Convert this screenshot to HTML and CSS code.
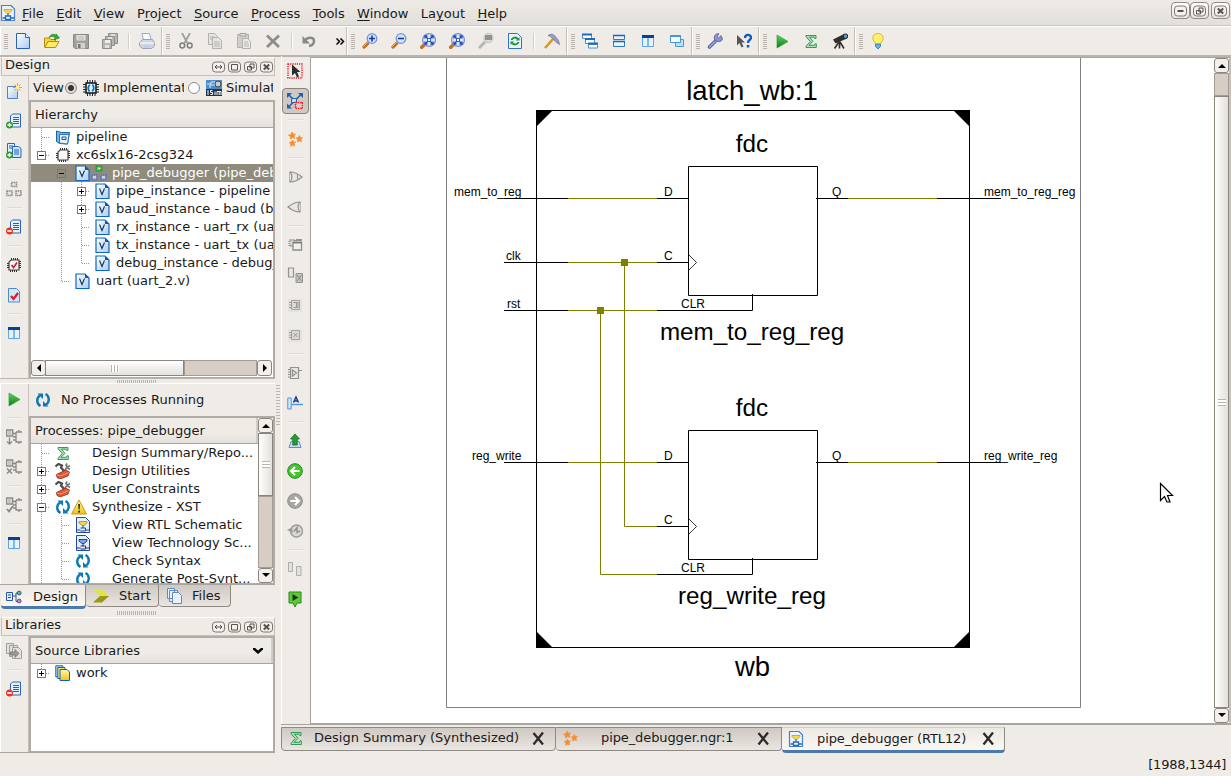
FILE: index.html
```html
<!DOCTYPE html>
<html lang="en">
<head>
<meta charset="utf-8">
<title>ISE Project Navigator</title>
<link rel="stylesheet" href="styles.css">
</head>
<body>
<svg class="defs" width="0" height="0" aria-hidden="true">
<defs>
<linearGradient id="gPage" x1="0" y1="0" x2="1" y2="1"><stop offset="0" stop-color="#fff"/><stop offset="1" stop-color="#a9cdf2"/></linearGradient>
<linearGradient id="gGreen" x1="0" y1="0" x2="0" y2="1"><stop offset="0" stop-color="#5fd45f"/><stop offset="1" stop-color="#0a7d14"/></linearGradient>
<linearGradient id="gYel" x1="0" y1="0" x2="0" y2="1"><stop offset="0" stop-color="#fff9a0"/><stop offset="1" stop-color="#f2c11c"/></linearGradient>
</defs>
<symbol id="b-v" viewBox="0 0 20 18"><path d="M10.5 0v18" class="dot"/></symbol>
<symbol id="b-t" viewBox="0 0 20 18"><path d="M10.5 0v18M11 9.500h8" class="dot"/></symbol>
<symbol id="b-l" viewBox="0 0 20 18"><path d="M10.500 0v10M11 9.500h8" class="dot"/></symbol>
<symbol id="b-box" viewBox="0 0 20 18"><path d="M15 9.500h4" class="dot"/><rect x="6.500" y="5.500" width="8" height="8" fill="#fff" stroke="#7d7a74"/><path d="M8 9.500h5" stroke="#000"/></symbol>
<symbol id="b-minus" viewBox="0 0 20 18"><path d="M10.500 0v5" class="dot"/><use href="#b-box"/></symbol>
<symbol id="b-plus" viewBox="0 0 20 18"><path d="M10.500 0v18" class="dot"/><use href="#b-box"/><path d="M10.500 7v5" stroke="#000"/></symbol>
<symbol id="b-plus1" viewBox="0 0 20 18"><path d="M10.500 0v5" class="dot"/><use href="#b-box"/><path d="M10.500 7v5" stroke="#000"/></symbol>
<symbol id="b-minusv" viewBox="0 0 20 18"><path d="M10.500 0v18" class="dot"/><use href="#b-box"/></symbol>
<symbol id="b-sel" viewBox="0 0 20 18"><path d="M15 9.500h4" class="dot"/><rect x="6.500" y="5.500" width="8" height="8" fill="none" stroke="#7c786a"/><path d="M8 9.500h5" stroke="#000"/></symbol>

<symbol id="new" viewBox="0 0 16 16"><path d="M1.500.5h9l4 4v11h-13z" fill="url(#gPage)" stroke="#2a62b8"/><path d="M10.500.5v4h4" fill="#fff" stroke="#2a62b8"/></symbol>
<symbol id="open" viewBox="0 0 16 16"><path d="M.5 14V5h5l1 1.500h5V9" fill="#f5d73b" stroke="#b78d10"/><path d="M.8 14.500L4 8.500h11l-3.500 6z" fill="#ffec62" stroke="#b78d10"/><path d="M5 4.500C7 1 10 .5 12 2.500V.8L15.500 5 10 6.800l1.200-2C9.500 3.300 7.500 3 5 4.500z" fill="#37ad2c" stroke="#157d17" stroke-width=".6"/></symbol>
<symbol id="save" viewBox="0 0 16 16"><path d="M.5 1.500h15v14H2L.5 14z" fill="#a3a19e" stroke="#8a8885"/><path d="M3.500 2h9v5.500h-9z" fill="#e4e2df"/><path d="M5 4h6M5 6h6" stroke="#b5b3b0"/><path d="M4 10h8v5.500H4z" fill="#d4d2cf"/><path d="M5 11h2.500v4H5z" fill="#777"/></symbol>
<symbol id="saveall" viewBox="0 0 16 16"><g fill="#b9b7b4" stroke="#8f8d8a"><path d="M6.500.5h9v10h-9z"/><path d="M3.500 3.500h9v9h-9z"/><path d="M.5 6.500h9v9h-9z"/></g><path d="M3 7h5v3H3z" fill="#eee"/><path d="M3 12h4v3H3zM6 4h4v2H6zM9 1h4v2H9z" fill="#e4e2df"/></symbol>
<symbol id="print" viewBox="0 0 16 16"><path d="M3 .5h7.500l2 7h-8z" fill="#f8fbff" stroke="#9bacca"/><path d="M.5 10l3-3.500h10l2 3.500v3l-3 2.500h-9l-3-2.500z" fill="#d3d6de" stroke="#9fa4b0"/><path d="M1 10h14" stroke="#fff"/><path d="M4 12.500h8v2H4z" fill="#b7d0ee"/></symbol>
<symbol id="cut" viewBox="0 0 16 16"><path d="M4 0l5.500 10M12 0L6.500 10" stroke="#a19f9c" stroke-width="1.800" fill="none"/><circle cx="4.300" cy="12.500" r="2.400" fill="none" stroke="#807e7b" stroke-width="1.500"/><circle cx="11.700" cy="12.500" r="2.400" fill="none" stroke="#807e7b" stroke-width="1.500"/></symbol>
<symbol id="copy" viewBox="0 0 16 16"><g fill="#e6e4e1" stroke="#b3b1ae"><path d="M1.500.5h6l3 3v8h-9z"/><path d="M5.500 4.500h6l3 3v8h-9z"/></g><path d="M3 4h4M3 6h2M7 9h5M7 11h6M7 13h6" stroke="#b5b3b0"/></symbol>
<symbol id="paste" viewBox="0 0 16 16"><path d="M1.500 1.500h11v13h-11z" fill="#d0cecb" stroke="#b3b1ae"/><path d="M4 .5h6v2.500H4z" fill="#e4e2df" stroke="#a3a19e"/><path d="M6.500 5.500h5l3 3v7h-8z" fill="#eceae7" stroke="#b3b1ae"/><path d="M8 9h4M8 11h5M8 13h5" stroke="#b5b3b0"/></symbol>
<symbol id="del" viewBox="0 0 16 16"><path d="M2 2.500l12 11.500M14 2.500L2 14" stroke="#8f8d89" stroke-width="2.800"/></symbol>
<symbol id="undo" viewBox="0 0 16 16"><path d="M4 7.500C7 3.500 13 4 13 8c0 3-2 4.500-5 5" fill="none" stroke="#8b8986" stroke-width="2.500"/><path d="M1.500 3v7.500h7.500z" fill="#8b8986"/></symbol>
<symbol id="lens" viewBox="0 0 16 16"><path d="M1 15l5.500-5.500" stroke="#c36a1b" stroke-width="3.200"/><path d="M1 14l5-5" stroke="#f4a953" stroke-width="1"/><circle cx="10" cy="5.500" r="4.800" fill="#cfe6ff" stroke="#7e8fd6" stroke-width="1.300"/></symbol>
<symbol id="zin" viewBox="0 0 16 16"><use href="#lens"/><path d="M7 5.500h6M10 2.500v6" stroke="#153a9c" stroke-width="1.600"/></symbol>
<symbol id="zout" viewBox="0 0 16 16"><use href="#lens"/><path d="M7 5.500h6" stroke="#153a9c" stroke-width="1.600"/></symbol>
<symbol id="zfit" viewBox="0 0 16 16"><path d="M.5 15.500l4.500-4.500" stroke="#c8701f" stroke-width="3.600"/><circle cx="9" cy="7" r="6.400" fill="#d6eaff" stroke="#7e8fd6" stroke-width="1.300"/><path d="M5.500 3.500l7 7M12.500 3.500l-7 7" stroke="#1c45a6" stroke-width="1.300"/><path d="M5 5.500V3h2.500M10.500 3H13v2.500M5 8.500V11h2.500M10.500 11H13V8.500" fill="none" stroke="#1c45a6" stroke-width="1.300"/><path d="M7.500 5.500h3v3h-3z" fill="#eaf4ff" stroke="#1c45a6" stroke-width=".8"/></symbol>
<symbol id="zsel" viewBox="0 0 16 16"><path d="M1 15l6-6" stroke="#b8b6b3" stroke-width="3"/><circle cx="10.500" cy="5" r="4.600" fill="#dddbd8" stroke="#c2c0bd"/><path d="M7 2h7v5H7z" fill="#93918e"/></symbol>
<symbol id="refresh" viewBox="0 0 16 16"><path d="M1.500.5h9l4 4v11h-13z" fill="#e9f4ff" stroke="#3173bd"/><path d="M4.500 7c1-3 5-3 6-1M11.500 9c-1 3-5 3-6 1" fill="none" stroke="#16962c" stroke-width="2"/><path d="M9 7.500h3.500V4zM7 8.500H3.500V12z" fill="#16962c"/></symbol>
<symbol id="hammer" viewBox="0 0 16 16"><path d="M1 15l8-9" stroke="#d59a16" stroke-width="2.600"/><path d="M4 2.500C7 .5 9 1 11 3l3.500 4.500 1 4-3-2-4-4C7 4 6 3 4 2.500z" fill="#9a9dbd" stroke="#6d7092" stroke-width=".7"/></symbol>
<symbol id="casc" viewBox="0 0 16 16"><g fill="#fff" stroke="#4c8fd3"><path d="M.5 1.500h9v4h-9zM3.500 6.500h9v4h-9zM6.500 11.500h9v3.500h-9z"/></g><path d="M0 1.500h10M3 6h10M6 10.500h10" stroke="#1f6ac0" stroke-width="2"/></symbol>
<symbol id="tileh" viewBox="0 0 16 16"><g fill="#e8f3ff" stroke="#2a7bc5"><path d="M2.500 2.500h11v4h-11zM2.500 8.500h11v5h-11z"/></g><path d="M2 2.500h12M2 8.500h12" stroke="#1b64b8" stroke-width="1.500"/></symbol>
<symbol id="tilev" viewBox="0 0 16 16"><path d="M2.500 2.500h11v11h-11z" fill="#e8f3ff" stroke="#5da5e4"/><path d="M8 3v11" stroke="#5da5e4" stroke-width="1.500"/><path d="M2 3.500h12" stroke="#08409a" stroke-width="3"/></symbol>
<symbol id="float" viewBox="0 0 16 16"><path d="M6.500 6.500h8v7h-8z" fill="#bfe0fb" stroke="#4a96dc"/><path d="M1.500 2.500h10v7h-10z" fill="#f4faff" stroke="#4a96dc"/><path d="M1 3h11" stroke="#4a96dc" stroke-width="2"/></symbol>
<symbol id="wrench" viewBox="0 0 16 16"><path d="M2.500 14L9 7.500" stroke="#5a62a5" stroke-width="3.600" stroke-linecap="round"/><path d="M2.500 14L9 7.500" stroke="#9aa0d6" stroke-width="1.600" stroke-linecap="round"/><path d="M14 2.500L11.500 5 10 3.800 12 .8C8.500.3 6.500 3 7.500 6c1.500 3.500 7 3.500 8 0z" fill="#8b92cf" stroke="#525a9f" stroke-width=".8"/></symbol>
<symbol id="whats" viewBox="0 0 16 16"><path d="M1 2v10.500L3.500 10l2 4.500 2-1-2-4H9z" fill="#555"/><path d="M9 5c0-4 6-4 6-.5 0 2.500-3 2.500-3 5.500" fill="none" stroke="#0b5bc0" stroke-width="2.300"/><path d="M10.800 12h2.500v2.500h-2.500z" fill="#0b5bc0"/></symbol>
<symbol id="play" viewBox="0 0 16 16"><path d="M3 2l11 6.500L3 15z" fill="url(#gGreen)" stroke="#27a33b" stroke-width=".7"/></symbol>
<symbol id="sigma" viewBox="0 0 16 16"><path d="M3 2.500h10v3h-1.200L11 4.200H6.500L10 8.300 6 12.300h5.300l.8-1.500h1.200V14.500H3v-1.200L7.300 8.500 3 3.800z" fill="#a9e0b5" stroke="#239347" stroke-width=".9"/></symbol>
<symbol id="scope" viewBox="0 0 16 16"><path d="M1 6.500L12 1l3 4.500L3.500 10.500z" fill="#30302d"/><circle cx="13.500" cy="3.200" r="2.300" fill="#4ba0c8" stroke="#222"/><path d="M7.500 8v7.500M7 9l-4.500 6.500M8 9l4 6.500" stroke="#30302d" stroke-width="1.600"/></symbol>
<symbol id="bulb" viewBox="0 0 16 16"><path d="M5.500 11C5 8.500 2.800 7.800 2.800 5c0-6 10.400-6 10.400 0 0 2.800-2.200 3.500-2.700 6z" fill="#fff36a" stroke="#e0b72c"/><path d="M5.500 11h5v2.500L8 16l-2.500-2.500z" fill="#69aee9" stroke="#3377b7" stroke-width=".8"/></symbol>

<symbol id="newsrc" viewBox="0 0 16 16"><path d="M1.500 3.500h10v12h-10z" fill="url(#gPage)" stroke="#4f83c8"/><path d="M11.500 0v9M7 4.500h9M8.500 1.500l6 6M14.500 1.500l-6 6" stroke="#f2973a"/><circle cx="11.500" cy="4.500" r="1.800" fill="#fff089"/></symbol>
<symbol id="doc" viewBox="0 0 16 16"><path d="M6.500 1h8v13h-10V3z" fill="#e5f1fd" stroke="#2a66be"/><path d="M7 4.500h6M7 6.500h6M7 8.500h6M7 10.500h6" stroke="#1d62c0"/></symbol>
<symbol id="adddoc" viewBox="0 0 16 16"><use href="#doc"/><circle cx="3.500" cy="12" r="3.500" fill="#2d9f32"/><path d="M1.500 12h4M3.500 10v4" stroke="#fff" stroke-width="1.300"/></symbol>
<symbol id="addcopy" viewBox="0 0 16 16"><path d="M1.500.5h7v11h-7z" fill="#e5f1fd" stroke="#2a66be"/><path d="M6.500 3.500h6l2.500 2v9H6.500z" fill="#cfe5fb" stroke="#2a66be"/><path d="M3 3h4M3 5h3M8 7h5M8 9h5M8 11h5" stroke="#1d62c0"/><circle cx="3.500" cy="12" r="3.500" fill="#2d9f32"/><path d="M1.500 12h4M3.500 10v4" stroke="#fff" stroke-width="1.300"/></symbol>
<symbol id="deldoc" viewBox="0 0 16 16"><use href="#doc"/><circle cx="3.500" cy="12" r="3.500" fill="#df3922"/><path d="M1.300 12h4.400" stroke="#fff" stroke-width="1.600"/></symbol>
<symbol id="hier" viewBox="0 0 16 16"><g fill="#e8e6e3" stroke="#92908d" stroke-width="1.600"><path d="M5.500 1.500h5v4h-5zM1 10h5v4.500H1zM10 10h5v4.500h-5z" stroke-dasharray="1.500 .5"/></g></symbol>
<symbol id="hierg" viewBox="0 0 16 16"><g stroke-width="1.800" stroke-dasharray="1.500 .4"><path d="M5.500 1.500h5v4h-5z" stroke="#1b9a30" fill="#bfe8c0"/><path d="M1 10h5v4.500H1zM10 10h5v4.500h-5z" stroke="#6678b4" fill="#c9d6ec"/></g></symbol>
<symbol id="chip" viewBox="0 0 16 16"><path d="M5 3h8v10H3V5z" fill="#f7f7f5" stroke="#444" stroke-width="1.200"/><path d="M5.500 1v2M7.500 1v2M9.500 1v2M11.500 1v2M4.500 13v2M6.500 13v2M8.500 13v2M10.500 13v2M1 6.500h2M1 8.500h2M1 10.500h2M13 4.500h2M13 6.500h2M13 8.500h2M13 10.500h2" stroke="#333"/></symbol>
<symbol id="chipchk" viewBox="0 0 16 16"><use href="#chip"/><path d="M5.500 8l2 2.500 3.500-5" fill="none" stroke="#d32028" stroke-width="1.700"/></symbol>
<symbol id="chipblue" viewBox="0 0 16 16"><path d="M3 3h10v10H3z" fill="#e3f3fb" stroke="#111" stroke-width="1.500"/><path d="M4.500 0v3M7 0v3M9.500 0v3M12 0v3M4.500 13v3M7 13v3M9.500 13v3M12 13v3M0 4.500h3M0 7h3M0 9.500h3M0 12h3M13 4.500h3M13 7h3M13 9.500h3M13 12h3" stroke="#222"/><path d="M6.500 11.500C4.500 9 5 6 7 5M9.500 4.500c2 2.500 1.500 5.500-.5 6.500" fill="none" stroke="#0c70b6" stroke-width="1.800"/></symbol>
<symbol id="docchk" viewBox="0 0 16 16"><path d="M2.500 1.500h8l3 3v10.500h-11z" fill="#d4e8fb" stroke="#4c8ad0"/><path d="M5 9l2.500 3L12 6" fill="none" stroke="#dc1e25" stroke-width="2.300"/></symbol>
<symbol id="isim" viewBox="0 0 16 16"><path d="M0 0h16v10H0z" fill="#4b8ecb"/><path d="M1 4h4V2h4v3H4v3" fill="none" stroke="#d8ecff"/><circle cx="12" cy="4" r="3" fill="#ccc" stroke="#444"/><path d="M0 9h16v7H0z" fill="#20324c"/><path d="M2 10v5M6.500 10.500H4.500v2h2v2h-2M9 11.500V15M11 15v-3.500h2.200V15M13.200 11.500H15V15" fill="none" stroke="#fff"/></symbol>
<symbol id="project" viewBox="0 0 16 16"><path d="M1.500 2l5 1.500h8l-2 11.500-8-.5-3-2z" fill="#73b5ea" stroke="#17659f"/><path d="M4.500 5.500h9.500l-1.500 9.500-8-1z" fill="#e7f4ff" stroke="#2a78b5"/><path d="M7 8h4v2.500H7z" fill="none" stroke="#1c4f9e"/></symbol>
<symbol id="v" viewBox="0 0 16 16"><path d="M1 1h9l4 4v10.500H1z" fill="url(#gPage)" stroke="#0b66c3" stroke-width="1.200"/><path d="M10 1v4h4z" fill="#234f9e"/><path d="M4.500 5.500L7 11.500l2.500-6" fill="none" stroke="#16304f" stroke-width="1.100"/></symbol>
<symbol id="cyc" viewBox="0 0 16 16"><path d="M5.500 14C1.500 12 1 6 5 3.500M10.500 2C14.500 4 15 10 11 12.500" fill="none" stroke="#0d78b8" stroke-width="2.400"/><path d="M2.500 1.500h5.500v5.500zM13.500 14.500H8V9z" fill="#0d78b8"/></symbol>
<symbol id="warn" viewBox="0 0 16 16"><path d="M8 1l7.500 14H.5z" fill="url(#gYel)" stroke="#c79a12" stroke-linejoin="round"/><path d="M7.200 5h1.800l-.4 5.500h-1zM7.200 11.800H9v1.700H7.200z" fill="#222"/></symbol>
<symbol id="tools" viewBox="0 0 16 16"><path d="M.5 3.500l3-2.500 3.500 1.500L6 4.500l4 4.500" fill="none" stroke="#4a4a48" stroke-width="2.200"/><path d="M15 2.500L12.500 4 11 2.500l1-2M11.800 4.500L8 10M15 6.500l-3-2" fill="none" stroke="#77797b" stroke-width="1.700"/><path d="M1.500 11.500l9-4.500 4 2-1.500 4L5 16l-3-1.500z" fill="#e0583a" stroke="#8f2d17" stroke-width=".8"/><path d="M2 12l3.500 1L14 9.500" fill="none" stroke="#f3967b"/></symbol>
<symbol id="rtl" viewBox="0 0 16 16"><path d="M1.500.5h9l4 4v11h-13z" fill="#e2effc" stroke="#25479d"/><path d="M4 4.500h8v1.500L9 8.500H7L4 6z" fill="#f6d44a" stroke="#b28a1e" stroke-width=".8"/><path d="M8 8.500V11M2 13h3.500M5.500 11h5v3h-5M10.500 13h3.500" stroke="#25479d" fill="none"/></symbol>
<symbol id="tech" viewBox="0 0 16 16"><path d="M1.500.5h9l4 4v11h-13z" fill="#e2effc" stroke="#25479d"/><path d="M4 4.500h8v1.500L9 8.500H7L4 6z" fill="#7ea8de" stroke="#25479d"/><path d="M8 8.500V11M2 13h3.500M5.500 11h5v3h-5M10.500 13h3.500" stroke="#16307c" fill="none"/></symbol>
<symbol id="app" viewBox="0 0 16 16"><path d="M1.500.5h9.500l3.500 3.500v11.500h-13z" fill="#eaf4ff" stroke="#4a80cc" stroke-width="1.200"/><path d="M4 4.500h8v1L9 8.500H7L4 5.500z" fill="#f8d94a" stroke="#c4952a" stroke-width=".8"/><path d="M8 8.500v2.500M2.500 13h3M10.500 13H14M5.500 11h5v3.500h-5z" stroke="#2a66be" fill="none" stroke-width="1.300"/></symbol>
<symbol id="rung" viewBox="0 0 16 16"><path d="M.7 1h6v6h-6z" fill="#f2f0ed" stroke="#8b8986" stroke-width="1.300"/><path d="M2 3h3.500M2 5h3.500" stroke="#9a9895"/><path d="M10 3h3V1M13 3h3M10 3v10h3v2M13 13h3M7 4.500h3M7 8h3M7 11h3" fill="none" stroke="#8b8986" stroke-width="1.300"/></symbol>
<symbol id="run1" viewBox="0 0 16 16"><use href="#rung"/><path d="M3.500 8.500V15M1 12.500L3.500 15 6 12.500" fill="none" stroke="#8b8986" stroke-width="1.300"/></symbol>
<symbol id="run2" viewBox="0 0 16 16"><use href="#rung"/><path d="M1 9.500l5 5M6 9.500l-5 5" stroke="#8b8986" stroke-width="1.500"/></symbol>
<symbol id="run3" viewBox="0 0 16 16"><use href="#rung"/><path d="M1 12l2 2.500L7 9" fill="none" stroke="#8b8986" stroke-width="1.800"/></symbol>
<symbol id="libg" viewBox="0 0 16 16"><g fill="#e4e2df" stroke="#a09e9b"><path d="M.5.5h7v10h-7zM3.500 2.500h8v11h-8z"/><path d="M6.500 4.500h6l3 3v8h-9z"/></g><path d="M4 9h5V6.500l4 4-4 4V12H4z" fill="#9b9996" stroke="#777" stroke-width=".8"/></symbol>
<symbol id="work" viewBox="0 0 16 16"><g stroke="#0c62b8"><path d="M.8.800h7v11h-7z" fill="#bfe2fb"/><path d="M2.800 2.500h7v11h-7z" fill="#ffe96b"/><path d="M5 4.500h7l2.500 2.500v8.500H5z" fill="url(#gYel)"/></g></symbol>
<symbol id="t-design" viewBox="0 0 16 16"><path d="M.5 3.500h6v8h-6z" fill="#dcecff" stroke="#2b55a6"/><path d="M2 6h3M2 8.500h3M7 7h3V4h2M10 7v5.500h2" stroke="#2b55a6" fill="none"/><circle cx="13.200" cy="4" r="1.900" fill="#6fbd58" stroke="#285d9c"/><circle cx="13.200" cy="12" r="1.900" fill="#d58bb5" stroke="#67408b"/></symbol>
<symbol id="t-start" viewBox="0 0 16 16"><path d="M0 1.500h9l7 6.500H7z" fill="#dfe352"/><path d="M7 8h9l-7 6.500H0z" fill="#9b9810"/></symbol>
<symbol id="t-files" viewBox="0 0 16 16"><g fill="#e9f2ff" stroke="#6288c4"><path d="M1.500.5h7v10h-7zM3.500 2.500h8v11h-8z"/><path d="M6.500 4.500h6l3 3v8h-9z"/></g></symbol>

<symbol id="pick" viewBox="0 0 16 16"><path d="M1 1h14v14H1z" fill="none" stroke="#ee1c23" stroke-width="1.400" stroke-dasharray="1.200 1"/><path d="M5 1.500v11L8 10l2 4.500 2-1L10 9h3.500z" fill="#2b2b2b"/></symbol>
<symbol id="zoomv" viewBox="0 0 16 16"><path d="M2 2l11 11M13.500 2L2 13.500" stroke="#1f5fb5" stroke-width="1.600"/><path d="M0 5V0h5zM16 5V0h-5zM0 10.500v5h5z" fill="#1f5fb5"/><path d="M4.500 5.500h5v4h-5z" fill="#c8def5" stroke="#1f5fb5"/><path d="M8.500 9.500h7v6h-7z" fill="#d9cfc9" stroke="#f01c23" stroke-width="1.600" stroke-dasharray="1.500 .8"/></symbol>
<symbol id="stars" viewBox="0 0 16 16"><g fill="#f58a2c" stroke="#f79a3f" stroke-linejoin="round" stroke-width="1"><path d="M5 1l1 2.200 2.500-.2L7 5l1 2.300-2.400-.7L3.500 8l.2-2.500L1.500 4.300 4 3.500z"/><path d="M12.500 4.500l.8 2 2.200.2-1.600 1.700.7 2.300-2-1-2 1.200.3-2.400-1.700-1.400 2.200-.5z"/><path d="M5.500 9l.8 1.900 2.200.1L7 12.700l.7 2.200-2.100-.9-2 1.300.3-2.400-1.700-1.400 2.300-.5z"/></g></symbol>
<symbol id="outp" viewBox="0 0 16 16"><path d="M3 3c5 0 9 2.500 12 5-3 2.500-7 5-12 5z" class="g"/><path d="M3 3c2.500 2 2.500 8 0 10M10.500 5.500v5" class="g"/></symbol>
<symbol id="inp" viewBox="0 0 16 16"><path d="M13 3C8 3 4 5.500 1 8c3 2.500 7 5 12 5z" class="g"/><path d="M13 3c-2.500 2-2.500 8 0 10" class="g"/></symbol>
<symbol id="n1" viewBox="0 0 16 16"><path d="M2.500 3h6v6h-6z" fill="#ddd" stroke="#8f8d8a" stroke-dasharray="1 1" stroke-width="2"/><path d="M6 5.500h8.500V13H6z" fill="#f2f0ed" stroke="#8f8d8a" stroke-width="1.300"/><path d="M6 5.500h9M9 3h6" stroke="#777" stroke-width="1.500"/></symbol>
<symbol id="n2" viewBox="0 0 16 16"><path d="M1.500 1h5v9h-5z" class="g"/><path d="M9 6.500h6.500v9H9z" fill="#c6c4c1" stroke="#96948f"/><path d="M10 8l4.500 6M14.500 8L10 14" stroke="#888"/></symbol>
<symbol id="n3" viewBox="0 0 16 16"><path d="M1 2h14v13H1z" fill="#e6e3df"/><path d="M4.500 3.500h8v9h-8z" fill="#dbd9d6" stroke="#a5a3a0"/><path d="M6.500 5.500h3v5h-3M9.500 5.500h1.500v5H8M2 5.500h3M2 8h3M2 10.500h3" fill="none" stroke="#9a9895"/></symbol>
<symbol id="n4" viewBox="0 0 16 16"><path d="M1 2h14v13H1z" fill="#e6e3df"/><path d="M4.500 3.500h8v9h-8z" fill="#dbd9d6" stroke="#a5a3a0"/><path d="M6.500 6l4 4M10.500 6l-4 4M2 5.500h3M2 8h3M2 10.500h3" fill="none" stroke="#9a9895"/></symbol>
<symbol id="n5" viewBox="0 0 16 16"><path d="M3.500 2.500h8v11h-8zM5.500 5l4 3-4 3zM11 5.500h4M1 4.500h3M1 7h3M1 9.500h3M1 12h3" class="g"/></symbol>
<symbol id="label" viewBox="0 0 16 16"><path d="M.8 3h3.400v11H.8z" fill="#d6eafd" stroke="#4b97e0"/><path d="M4.500 9.500H16" stroke="#4b97e0" stroke-width="1.400"/><path d="M6.500 7.500L9 2l2.500 5.500M7.500 6h3" fill="none" stroke="#173c91" stroke-width="1.500"/></symbol>
<symbol id="up" viewBox="0 0 16 16"><path d="M4 8.500L2 14.500h12L12 8.500z" fill="#c5dcf4" stroke="#5a8fd0"/><path d="M8 1l4.500 5h-2.300v6H5.800V6H3.500z" fill="#279c37" stroke="#0f6d20" stroke-width=".8"/></symbol>
<symbol id="back" viewBox="0 0 16 16"><circle cx="8" cy="8" r="7.300" fill="#48c52c" stroke="#1d8c17"/><path d="M12.500 8H4.500M8 4L4 8l4 4" fill="none" stroke="#fff" stroke-width="2"/></symbol>
<symbol id="fwd" viewBox="0 0 16 16"><circle cx="8" cy="8" r="7.300" fill="#a9a7a4" stroke="#8b8986"/><path d="M3.500 8h8M8 4l4 4-4 4" fill="none" stroke="#fff" stroke-width="2"/></symbol>
<symbol id="hist" viewBox="0 0 16 16"><circle cx="9.500" cy="8" r="6" fill="#dad8d5" stroke="#9d9b98" stroke-width="1.400"/><path d="M7 8.500l3-4v6M10 8.500h3" fill="none" stroke="#8f8d8a" stroke-width="1.300"/><path d="M0 7l5-2.500L6 10z" fill="#9d9b98"/></symbol>
<symbol id="two" viewBox="0 0 16 16"><path d="M1.500 1.500h4v9h-4zM9.500 5.500h4.500v9H9.500z" fill="#e3e1de" stroke="#b0aeab"/></symbol>
<symbol id="flag" viewBox="0 0 16 16"><path d="M2 1h12v11h-4l-2 4-2-4H2z" fill="#5cc93a" stroke="#2b8618"/><path d="M5.500 3l6 3.500-6 3.500z" fill="#143c12"/></symbol>
<symbol id="w-h" viewBox="0 0 13 12"><rect x=".5" y="1" width="12" height="10" rx="3" class="wb"/><path d="M3 6h7M5 4L3 6l2 2M8 4l2 2-2 2" class="wl"/></symbol>
<symbol id="w-max" viewBox="0 0 13 12"><rect x=".5" y="1" width="12" height="10" rx="3" class="wb"/><path d="M3.500 3.500h6v5.500h-6z" class="wl"/></symbol>
<symbol id="w-res" viewBox="0 0 13 12"><rect x=".5" y="1" width="12" height="10" rx="3" class="wb"/><path d="M6 3h4v4H6zM3.500 5.500h4V9h-4z" class="wl"/></symbol>
<symbol id="w-x" viewBox="0 0 13 12"><rect x=".5" y="1" width="12" height="10" rx="3" class="wb"/><path d="M3.800 3.500l5.400 5M9.200 3.500l-5.400 5" class="wl" stroke-width="2"/></symbol>
<symbol id="w-min" viewBox="0 0 13 12"><rect x=".5" y="1" width="12" height="10" rx="3" class="wb"/><path d="M3.500 6h6" class="wl" stroke-width="2"/></symbol>
<symbol id="close" viewBox="0 0 13 13"><path d="M1.500 1l9.500 11.500M11 .5L1.500 12.500" stroke="#2b2b2b" stroke-width="2.300"/></symbol>
</svg>

<div class="app">
<header class="menubar">
  <svg class="i"><use href="#app"/></svg>
  <nav class="menus"><span><u>F</u>ile</span><span><u>E</u>dit</span><span><u>V</u>iew</span><span>P<u>r</u>oject</span><span><u>S</u>ource</span><span><u>P</u>rocess</span><span><u>T</u>ools</span><span><u>W</u>indow</span><span>La<u>y</u>out</span><span><u>H</u>elp</span></nav>
  <div class="winbtns"><b><svg><use href="#w-min"/></svg></b><b><svg><use href="#w-res"/></svg></b><b class="last"><svg><use href="#w-x"/></svg></b></div>
</header>

<div class="toolbar">
  <div class="group g1"><i class="grip"></i><a><svg class="i"><use href="#new"/></svg></a><a><svg class="i"><use href="#open"/></svg></a><a><svg class="i"><use href="#save"/></svg></a><a><svg class="i"><use href="#saveall"/></svg></a><i class="sep"></i><a><svg class="i"><use href="#print"/></svg></a></div>
  <div class="group g2"><i class="grip"></i><a><svg class="i"><use href="#cut"/></svg></a><a><svg class="i"><use href="#copy"/></svg></a><a><svg class="i"><use href="#paste"/></svg></a><a><svg class="i"><use href="#del"/></svg></a><i class="sep"></i><a><svg class="i"><use href="#undo"/></svg></a><span class="more"><svg width="9" height="7" viewBox="0 0 9 7"><path d="M.5.500l3 3-3 3M4.500.5l3 3-3 3" fill="none" stroke="#000" stroke-width="1.500"/></svg></span></div>
  <div class="group g3"><i class="grip"></i><a><svg class="i"><use href="#zin"/></svg></a><a><svg class="i"><use href="#zout"/></svg></a><a><svg class="i"><use href="#zfit"/></svg></a><a><svg class="i"><use href="#zfit"/></svg></a><a><svg class="i"><use href="#zsel"/></svg></a><a><svg class="i"><use href="#refresh"/></svg></a><i class="sep"></i><a><svg class="i"><use href="#hammer"/></svg></a></div>
  <div class="group g4"><i class="grip"></i><a><svg class="i"><use href="#casc"/></svg></a><a><svg class="i"><use href="#tileh"/></svg></a><a><svg class="i"><use href="#tilev"/></svg></a><a><svg class="i"><use href="#float"/></svg></a></div>
  <div class="group g5"><i class="grip"></i><a><svg class="i"><use href="#wrench"/></svg></a><a><svg class="i"><use href="#whats"/></svg></a></div>
  <div class="group g6"><i class="grip"></i><a><svg class="i"><use href="#play"/></svg></a><a><svg class="i"><use href="#sigma"/></svg></a><a><svg class="i"><use href="#scope"/></svg></a></div>
  <div class="group g7"><i class="grip"></i><a><svg class="i"><use href="#bulb"/></svg></a></div>
</div>

<main class="body">
<aside class="left">
  <div class="title"><span>Design</span><svg><use href="#w-h"/></svg><svg><use href="#w-max"/></svg><svg><use href="#w-res"/></svg><svg><use href="#w-x"/></svg></div>
  <section class="dock design">
    <div class="vbar"><a><svg class="i"><use href="#newsrc"/></svg></a><a><svg class="i"><use href="#adddoc"/></svg></a><a><svg class="i"><use href="#addcopy"/></svg></a><i></i><a><svg class="i"><use href="#hier"/></svg></a><i></i><a><svg class="i"><use href="#deldoc"/></svg></a><i></i><a><svg class="i"><use href="#chipchk"/></svg></a><a><svg class="i"><use href="#docchk"/></svg></a><i></i><a><svg class="i"><use href="#tilev"/></svg></a></div>
    <div class="pane">
      <div class="viewrow"><span class="vl">View</span><span class="radio on"></span><svg class="i"><use href="#chipblue"/></svg><span class="impl">Implementat</span><span class="radio"></span><svg class="i"><use href="#isim"/></svg><span class="sim">Simulat</span></div>
      <div class="box">
        <div class="head">Hierarchy</div>
        <div class="rows">
          <div class="row"><svg class="c"><use href="#b-t"/></svg><span class="s1"><svg class="i"><use href="#project"/></svg></span>pipeline</div>
          <div class="row"><svg class="c"><use href="#b-minus"/></svg><span class="s1"><svg class="i"><use href="#chip"/></svg></span>xc6slx16-2csg324</div>
          <div class="row sel"><i class="c"></i><svg class="c"><use href="#b-sel"/></svg><span class="s2"><svg class="i"><use href="#v"/></svg><svg class="i"><use href="#hierg"/></svg></span>pipe_debugger (pipe_deb</div>
          <div class="row"><i class="c"></i><svg class="c"><use href="#b-v"/></svg><svg class="c"><use href="#b-plus"/></svg><span class="s1"><svg class="i"><use href="#v"/></svg></span>pipe_instance - pipeline</div>
          <div class="row"><i class="c"></i><svg class="c"><use href="#b-v"/></svg><svg class="c"><use href="#b-plus"/></svg><span class="s1"><svg class="i"><use href="#v"/></svg></span>baud_instance - baud (b</div>
          <div class="row"><i class="c"></i><svg class="c"><use href="#b-v"/></svg><svg class="c"><use href="#b-t"/></svg><span class="s1"><svg class="i"><use href="#v"/></svg></span>rx_instance - uart_rx (ua</div>
          <div class="row"><i class="c"></i><svg class="c"><use href="#b-v"/></svg><svg class="c"><use href="#b-t"/></svg><span class="s1"><svg class="i"><use href="#v"/></svg></span>tx_instance - uart_tx (ua</div>
          <div class="row"><i class="c"></i><svg class="c"><use href="#b-v"/></svg><svg class="c"><use href="#b-l"/></svg><span class="s1"><svg class="i"><use href="#v"/></svg></span>debug_instance - debug_</div>
          <div class="row"><i class="c"></i><svg class="c"><use href="#b-l"/></svg><span class="s1"><svg class="i"><use href="#v"/></svg></span>uart (uart_2.v)</div>
        </div>
        <div class="hscroll"><b class="btn"><svg width="6" height="8" viewBox="0 0 6 8"><path d="M5 0v8L1 4z"/></svg></b><b class="thumb"><i></i></b><b class="trough"></b><b class="btn"><svg width="6" height="8" viewBox="0 0 6 8"><path d="M1 0v8l4-4z"/></svg></b></div>
      </div>
    </div>
  </section>
  <div class="hsplit"></div>
  <section class="dock proc">
    <div class="vbar"><a><svg class="i"><use href="#play"/></svg></a><i></i><a><svg class="i"><use href="#run1"/></svg></a><a><svg class="i"><use href="#run2"/></svg></a><i></i><a><svg class="i"><use href="#run3"/></svg></a><i></i><a><svg class="i"><use href="#tilev"/></svg></a></div>
    <div class="pane">
      <div class="status"><svg class="i"><use href="#cyc"/></svg><span>No Processes Running</span></div>
      <div class="box split">
        <div class="col">
          <div class="head notch">Processes: pipe_debugger</div>
          <div class="rows">
            <div class="row"><svg class="c"><use href="#b-t"/></svg><span class="s2"><svg class="i"><use href="#sigma"/></svg></span>Design Summary/Repo...</div>
            <div class="row"><svg class="c"><use href="#b-plus"/></svg><span class="s2"><svg class="i"><use href="#tools"/></svg></span>Design Utilities</div>
            <div class="row"><svg class="c"><use href="#b-plus"/></svg><span class="s2"><svg class="i"><use href="#tools"/></svg></span>User Constraints</div>
            <div class="row"><svg class="c"><use href="#b-minusv"/></svg><span class="s2"><svg class="i"><use href="#cyc"/></svg><svg class="i"><use href="#warn"/></svg></span>Synthesize - XST</div>
            <div class="row"><svg class="c"><use href="#b-v"/></svg><svg class="c"><use href="#b-t"/></svg><span class="s2"><svg class="i"><use href="#rtl"/></svg></span>View RTL Schematic</div>
            <div class="row"><svg class="c"><use href="#b-v"/></svg><svg class="c"><use href="#b-t"/></svg><span class="s2"><svg class="i"><use href="#tech"/></svg></span>View Technology Sc...</div>
            <div class="row"><svg class="c"><use href="#b-v"/></svg><svg class="c"><use href="#b-t"/></svg><span class="s2"><svg class="i"><use href="#cyc"/></svg></span>Check Syntax</div>
            <div class="row"><svg class="c"><use href="#b-v"/></svg><svg class="c"><use href="#b-l"/></svg><span class="s2"><svg class="i"><use href="#cyc"/></svg></span>Generate Post-Synt...</div>
          </div>
        </div>
        <div class="vscroll"><b class="btn"><svg width="8" height="5" viewBox="0 0 8 5"><path d="M0 5h8L4 1z"/></svg></b><b class="thumb t1"><i></i></b><b class="trough"></b><b class="btn"><svg width="8" height="5" viewBox="0 0 8 5"><path d="M0 0h8L4 4z"/></svg></b></div>
      </div>
    </div>
  </section>
  <div class="ltabs"><span class="tab active w85"><svg class="i"><use href="#t-design"/></svg>Design</span><span class="tab w73"><svg class="i"><use href="#t-start"/></svg>Start</span><span class="tab w72"><svg class="i"><use href="#t-files"/></svg>Files</span></div>
  <div class="hsplit second"></div>
  <div class="title libs"><span>Libraries</span><svg><use href="#w-h"/></svg><svg><use href="#w-max"/></svg><svg><use href="#w-res"/></svg><svg><use href="#w-x"/></svg></div>
  <section class="dock lib">
    <div class="vbar"><a><svg class="i"><use href="#libg"/></svg></a><i></i><a><svg class="i"><use href="#deldoc"/></svg></a></div>
    <div class="pane"><div class="box">
      <div class="head notch">Source Libraries<svg class="chev" width="10" height="7" viewBox="0 0 10 7"><path d="M0 1h2l3 2.500L8 1h2v1.500L5 7 0 2.500z"/></svg></div>
      <div class="rows"><div class="row"><svg class="c"><use href="#b-plus1"/></svg><span class="s1"><svg class="i"><use href="#work"/></svg></span>work</div></div>
    </div></div>
  </section>
</aside>
<div class="vsplit"></div>
<section class="right">
  <div class="work">
    <div class="vbar main"><a><svg class="i"><use href="#pick"/></svg></a><a class="pressed"><svg class="i"><use href="#zoomv"/></svg></a><i></i><a><svg class="i"><use href="#stars"/></svg></a><i></i><a><svg class="i"><use href="#outp"/></svg></a><a><svg class="i"><use href="#inp"/></svg></a><i></i><a><svg class="i"><use href="#n1"/></svg></a><a><svg class="i"><use href="#n2"/></svg></a><a><svg class="i"><use href="#n3"/></svg></a><a><svg class="i"><use href="#n4"/></svg></a><i></i><a><svg class="i"><use href="#n5"/></svg></a><a><svg class="i"><use href="#label"/></svg></a><i></i><a><svg class="i"><use href="#up"/></svg></a><a><svg class="i"><use href="#back"/></svg></a><a><svg class="i"><use href="#fwd"/></svg></a><a><svg class="i"><use href="#hist"/></svg></a><i></i><a><svg class="i"><use href="#two"/></svg></a><a><svg class="i"><use href="#flag"/></svg></a></div>
    <div class="view">
      <svg class="schematic" width="903" height="665" viewBox="311 58 903 665">
        <path d="M446.500 58v649.500h634V58" fill="none" stroke="#808080"/>
        <path d="M536.500 110.500h433v537h-433z" fill="none" stroke="#000"/>
        <path d="M536 110h17l-17 17zM970 110h-17l17 17zM536 648h17l-17-17zM970 648h-17l17-17z"/>
        <g fill="none" stroke="#000">
          <path d="M688.500 166.500h129v129h-129zM688.500 430.500h129v129h-129z"/>
          <path d="M504 198.500h64M657 198.500h31M816 198.500h32M937 198.500h64M504 262.500h64M657 262.500h31M504 310.500h64M657 310.500h95.500V294"/>
          <path d="M504 462.500h64M657 462.500h31M816 462.500h32M937 462.500h64M657 526.500h31M657 574.500h95.500V558"/>
          <path d="M688.500 254.500l8 8-8 8M688.500 518.500l8 8-8 8" stroke-width=".8"/>
        </g>
        <path d="M568 198.500h89M848 198.500h89M568 262.500h89M568 310.500h89M568 462.500h89M848 462.500h89M624.500 262v264.500H657M600.500 310v264.500H657" fill="none" stroke="#808000"/>
        <path d="M621 259h7v7h-7zM597 307h7v7h-7z" fill="#808000"/>
        <g class="big"><text x="752" y="100" font-size="27.500">latch_wb:1</text><text x="752.500" y="676" font-size="27.500">wb</text>
          <text x="752" y="152">fdc</text><text x="752" y="416">fdc</text><text x="752" y="340">mem_to_reg_reg</text><text x="752" y="604">reg_write_reg</text></g>
        <g class="pin"><text x="454" y="196">mem_to_reg</text><text x="506" y="260">clk</text><text x="507" y="308">rst</text><text x="472" y="460">reg_write</text><text x="984" y="196">mem_to_reg_reg</text><text x="984" y="460">reg_write_reg</text>
          <text x="664" y="196">D</text><text x="664" y="260">C</text><text x="681" y="308">CLR</text><text x="832" y="196">Q</text><text x="664" y="460">D</text><text x="664" y="524">C</text><text x="681" y="572">CLR</text><text x="832" y="460">Q</text></g>
        <path d="M1160.500 483.500v17l4-4 2.500 5.500h3l-2.500-6.500h5z" fill="#fff" stroke="#000" stroke-width="1.200"/>
      </svg>
      <div class="vscroll big-sb"><b class="btn"><svg width="8" height="5" viewBox="0 0 8 5"><path d="M0 5h8L4 1z"/></svg></b><b class="trough t22"></b><b class="thumb t2"><i></i></b><b class="btn"><svg width="8" height="5" viewBox="0 0 8 5"><path d="M0 0h8L4 4z"/></svg></b></div>
    </div>
  </div>
  <div class="mtabs">
    <span class="tab m1"><svg class="i"><use href="#sigma"/></svg><span>Design Summary (Synthesized)</span><svg class="x"><use href="#close"/></svg></span>
    <span class="tab m2"><svg class="i"><use href="#stars"/></svg><span>pipe_debugger.ngr:1</span><svg class="x"><use href="#close"/></svg></span>
    <span class="tab m3 active"><svg class="i"><use href="#app"/></svg><span>pipe_debugger (RTL12)</span><svg class="x"><use href="#close"/></svg></span>
  </div>
</section>
</main>
<footer class="statusbar">[1988,1344]</footer>
</div>
</body>
</html>
```

FILE: styles.css
```css
* { box-sizing: border-box; }
body { margin: 0; background: #efebe7; font: 13px/18px "DejaVu Sans", sans-serif; color: #1a1a1a; }
svg { display: block; flex: none; }
.defs { position: absolute; }
.dot { fill: none; stroke: #9a9792; stroke-dasharray: 1 1; }
.g { fill: #e9e7e4; stroke: #93918e; stroke-width: 1.200; }
.wb { fill: #f4f1ed; stroke: #7b7771; }
.wl { fill: none; stroke: #55524e; }
.i { width: 16px; height: 16px; }
.app { width: 1231px; height: 776px; overflow: hidden; display: flex; flex-direction: column; }

.menubar { height: 26px; flex: none; display: flex; align-items: center; background: linear-gradient(#efebe7, #e2ded9); border-bottom: 1px solid #cbc6c0; }
.menubar > .i { margin: 1px 0 0; }
.menus { display: flex; gap: 12.400px; margin-left: 6px; padding-top: 3px; flex: 1; }
.menus u { text-underline-offset: 2px; text-decoration-thickness: 1px; }
.winbtns { display: flex; align-self: flex-start; padding: 2px 1px 0 0; }
.winbtns b { width: 19px; height: 17px; border: 1px solid #918b84; border-radius: 4px; display: grid; place-items: center; background: linear-gradient(#fff, #e8e4df); }
.winbtns .last { margin-left: 2px; }
.winbtns svg { width: 13px; height: 12px; }

.toolbar { height: 31px; flex: none; display: flex; border-top: 1px solid #fff; border-bottom: 2px solid #b9b4ae; }
.group { display: flex; align-items: center; padding-left: 9px; position: relative; border-right: 1px solid #c5c0ba; box-shadow: inset 1px 0 #fff; }
.group a { width: 29px; display: grid; place-items: center; }
.grip { position: absolute; left: 4px; top: 7px; width: 4px; height: 16px; background: repeating-linear-gradient(#b8b3ad 0 1px, transparent 1px 2px); }
.sep { width: 8px; height: 16px; background: linear-gradient(#fff, #fff) 5px 0 / 1px 16px no-repeat, linear-gradient(#d2cdc7, #d2cdc7) 4px 0 / 1px 16px no-repeat; }
.g1 { width: 162px; padding-left: 8px; }
.g2 { width: 185px; }
.g2 .sep { width: 7px; }
.g3 { width: 220px; }
.g4 { width: 125px; }
.g5 { width: 67px; }
.g6 { width: 96px; }
.g7 { flex: 1; border-right: 0; padding-left: 8px; }
.more { margin-left: 13px; }

.body { height: 695px; flex: none; display: flex; }
.left { width: 275px; display: flex; flex-direction: column; }
.title { height: 19px; margin: 0 0 0 1px; flex: none; border: 1px solid #c5c0ba; border-top-color: #fff; display: flex; align-items: center; gap: 3px; padding: 0 1px 0 3px; }
.title span { flex: 1; line-height: 16px; margin-top: -3px; }
.title svg { width: 13px; height: 12px; }
.dock { display: flex; flex: none; }
.design { height: 302px; }
.proc { height: 201px; border-top: 1px solid #fff; }
.lib { height: 117px; border-bottom: 1px solid #aaa59f; }
.vbar { width: 29px; flex: none; border-left: 1px solid #fff; border-right: 1px solid #c5c0ba; }
.vbar a { height: 30px; display: grid; place-items: center; padding-right: 1px; }
.vbar > i { display: block; height: 8px; margin: 0 6px; background: linear-gradient(#d5d0ca, #fff) 0 3px / 100% 2px no-repeat; }
.pane { width: 246px; display: flex; flex-direction: column; min-width: 0; }
.viewrow { height: 24px; display: flex; align-items: center; padding-left: 4px; flex: none; overflow: hidden; white-space: nowrap; }
.vl { width: 32px; }
.radio { width: 12px; height: 12px; border: 1px solid #8e8982; border-radius: 50%; background: #fff; flex: none; }
.radio.on { background: radial-gradient(circle, #333 0 2.500px, #ddd9d4 3.500px); }
.on + .i { margin: 0 4px 0 6px; }
.impl { width: 81px; overflow: hidden; margin-right: 4px; flex: none; }
.impl + .radio + .i { margin: 0 4px 0 6px; }
.sim { width: 47px; overflow: hidden; flex: none; }
.box { flex: 1; min-height: 0; background: #fff; border: 2px solid #b0aba5; border-bottom-width: 1px; display: flex; flex-direction: column; overflow: hidden; }
.head { height: 26px; flex: none; background: linear-gradient(#efebe7 60%, #e3dfda); border-bottom: 1px solid #a9a49e; line-height: 24px; padding-left: 4px; white-space: nowrap; display: flex; align-items: center; }
.notch { box-shadow: inset -2px 0 #d2cdc7; }
.chev { margin-left: auto; margin-right: 10px; }
.rows { flex: 1; min-height: 0; overflow: hidden; }
.row { height: 18px; display: flex; align-items: center; white-space: nowrap; }
.c { width: 20px; height: 18px; flex: none; }
.s1, .s2 { display: flex; flex: none; padding-left: 4px; }
.s1 { width: 25px; }
.s2 { width: 41px; }
.s1 .i, .s2 .i { margin-left: -.5px; margin-right: .5px; }
.sel { background: #8f8b7d; color: #fff; }
.hscroll { display: flex; height: 16px; flex: none; margin: 0 1px 1px 0; }
.hscroll b, .vscroll b { display: grid; place-items: center; border: 1px solid #8b857e; background: #f3f0ec; }
.hscroll .btn { width: 15px; border-radius: 3px; }
.hscroll .thumb { width: 139px; margin-left: -1px; background: linear-gradient(#fff, #e4e0db); }
.hscroll .trough { flex: 1; }
.hscroll .trough, .vscroll .trough { background: #d6cdc5; border-color: #a49c94; }
.hscroll .thumb i { width: 8px; height: 7px; background: repeating-linear-gradient(90deg, #b9b4ae 0 1px, #fff 1px 3px); }
.hsplit { height: 5px; flex: none; background: repeating-linear-gradient(90deg, #bab5af 0 1px, transparent 1px 2px) 117px 1px / 40px 4px no-repeat; border-top: 1px solid #b9b4ae; }
.hsplit.second { border: 0; height: 8px; background-position: 117px 2px; }
.status { height: 32px; display: flex; align-items: center; padding-left: 6px; gap: 10px; flex: none; }
.split { flex-direction: row; }
.col { flex: 1; min-width: 0; display: flex; flex-direction: column; }
.vscroll { width: 15px; flex: none; display: flex; flex-direction: column; }
.vscroll .btn { height: 15px; border-radius: 3px; flex: none; }
.vscroll .thumb { background: linear-gradient(90deg, #fff, #e4e0db); }
.vscroll .thumb i { width: 8px; height: 7px; background: repeating-linear-gradient(#b9b4ae 0 1px, #fff 1px 3px); }
.t1 { height: 63px; }
.vscroll .trough { flex: 1; }
.ltabs { display: flex; height: 25px; flex: none; padding-left: 1px; align-items: flex-start; border-top: 1px solid #aaa59f; }
.tab { display: flex; align-items: center; height: 22px; border: 1px solid #8f8983; border-top: 0; border-left-width: 0; border-radius: 0 0 4px 4px; background: linear-gradient(#cfc9c3, #e9e5e0); white-space: nowrap; }
.tab.active { background: linear-gradient(#ece8e4, #fbf8f4); height: 25px; border-bottom: 3px solid #4a7aab; }
.ltabs .tab { padding-left: 7px; gap: 10px; }
.ltabs .active { height: 24px; gap: 11px; padding-left: 5px; padding-top: 2px; }
.w85 { width: 85px; }
.w73 { width: 73px; }
.w72 { width: 72px; }
.vsplit { width: 6px; flex: none; background: repeating-linear-gradient(#bab5af 0 1px, transparent 1px 3px) 1px 328px / 4px 40px no-repeat; }

.right { width: 950px; display: flex; flex-direction: column; }
.work { height: 667px; display: flex; }
.vbar.main { width: 29px; border-right: 0; margin-top: -1px; }
.vbar.main a { padding: 0 2px 0 0; }
.vbar.main .pressed { height: 26px; margin: 2px 1px 2px 0; background: #cfc9c3; border: 1px solid #88827b; border-radius: 4px; padding-right: 1px; }
.view { width: 921px; display: flex; background: #fff; border: 1px solid #a9a49e; border-right: 2px solid #c5c0ba; }
.big { font: 24.200px "Liberation Sans", Arial, sans-serif; text-anchor: middle; }
.pin { font: 12px "Liberation Sans", Arial, sans-serif; }
.big-sb { width: 15px; height: 665px; }
.t22 { max-height: 23px; }
.t2 { flex: 1; }
.mtabs { display: flex; height: 28px; align-items: flex-start; padding-top: 2px; border-top: 1px solid #a9a49e; }
.mtabs .tab { height: 24px; border-top: 1px solid #8f8983; padding-left: 6px; padding-bottom: 2px; }
.mtabs .m1 { width: 275px; border-left-width: 1px; }
.mtabs .m2 { width: 226px; letter-spacing: -.1px; }
.mtabs .m3 { width: 223px; height: 26px; padding-top: 0; padding-bottom: 1px; border-top-color: #d0cbc5; letter-spacing: -.1px; }
.mtabs .x { width: 13px; height: 13px; margin-left: auto; }
.m1 > span { margin-left: 10px; }
.m2 > span { margin-left: 23px; }
.m3 > span { margin-left: 13px; }
.m1 .x { margin-right: 10px; }
.m2 .x { margin-right: 11px; }
.m3 .x { margin-right: 9px; }
.statusbar { flex: 1; text-align: right; padding: 4px 5px 0 0; letter-spacing: -.25px; }
```
